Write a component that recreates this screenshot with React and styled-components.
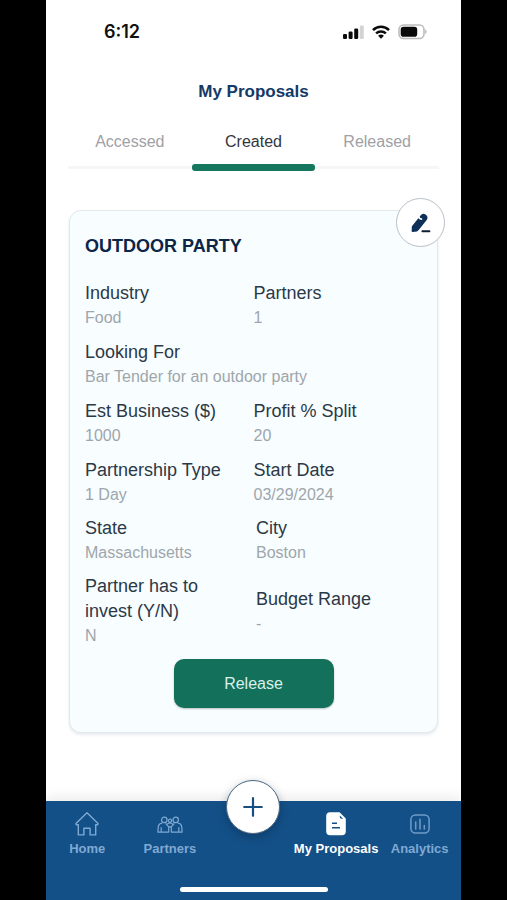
import React, { useState } from "react";
import styled, { createGlobalStyle } from "styled-components";

const GlobalStyle = createGlobalStyle`
  * {
    box-sizing: border-box;
  }

  body {
    margin: 0;
    background: #000;
    font-family: "Liberation Sans", Arial, sans-serif;
  }

  button {
    border: 0;
    padding: 0;
    background: none;
    font-family: inherit;
    cursor: pointer;
  }
`;

const Screen = styled.div`
  display: flex;
  flex-direction: column;
  min-height: 100vh;
  margin: 0 46px;
  background: #fff;
`;

const StatusBar = styled.div`
  display: flex;
  align-items: center;
  justify-content: space-between;
  height: 64px;
  padding: 0 34px 0 58px;
`;

const Time = styled.span`
  font-family: Inter, sans-serif;
  font-size: 18px;
  font-weight: 600;
  line-height: 24px;
  color: #111;
`;

const StatusIcons = styled.div`
  display: flex;
  align-items: center;
  gap: 8px;
`;

const Title = styled.h1`
  margin: 16px 0 0;
  font-size: 17px;
  line-height: 24px;
  text-align: center;
  color: #133a66;
`;

const Tabs = styled.div`
  display: grid;
  grid-template-columns: repeat(3, 1fr);
  margin: 24px 22px 0;
`;

const Tab = styled.button`
  display: flex;
  flex-direction: column;
  align-items: stretch;
  font-size: 16px;
  line-height: 28px;
  color: ${props => (props.$active ? "#33363b" : "#a0a1a4")};

  &::after {
    content: "";
    height: ${props => (props.$active ? 7 : 3)}px;
    margin-top: ${props => (props.$active ? 8 : 10)}px;
    border-radius: ${props => (props.$active ? 3 : 0)}px;
    background: ${props => (props.$active ? "#16775f" : "#f6f6f7")};
  }
`;

const Main = styled.main`
  flex: 1;
  padding: 39px 23px 28px;
`;

const Card = styled.article`
  position: relative;
  padding: 23px 15px 24px;
  border: 1px solid #e1e9ee;
  border-radius: 12px;
  background: #f8fdff;
  box-shadow: 0 2px 3px rgba(20, 50, 80, 0.1);
`;

const CardTitle = styled.h2`
  margin: 0 0 23px;
  font-size: 18px;
  line-height: 24px;
  color: #0d2547;
`;

const EditButton = styled.button`
  position: absolute;
  top: -13px;
  right: -8px;
  display: flex;
  align-items: center;
  justify-content: center;
  width: 49px;
  height: 49px;
  border: 1px solid #b9c0c8;
  border-radius: 50%;
  background: #fff;
`;

const Fields = styled.dl`
  display: grid;
  grid-template-columns: 1fr 1fr;
  align-items: center;
  gap: ${props => (props.$spaced ? "10px 5px" : "11px 0")};
  margin: 0 0 10px;
`;

const FieldBox = styled.div`
  grid-column: ${props => (props.$wide ? "1 / -1" : "auto")};
  padding-right: 16px;
`;

const Label = styled.dt`
  font-size: 18px;
  line-height: 25px;
  color: #2b3947;
`;

const Value = styled.dd`
  margin: 0;
  font-size: 16px;
  line-height: 23px;
  color: #9ea6ab;
`;

const ReleaseButton = styled.button`
  display: block;
  width: 160px;
  height: 49px;
  margin: 12px auto 0;
  border-radius: 10px;
  background: #13705b;
  box-shadow: 0 1px 2px rgba(0, 0, 0, 0.25);
  font-size: 16px;
  color: #d8f1e9;
`;

const BottomBar = styled.footer`
  background: #135087;
  box-shadow: 0 -4px 12px rgba(0, 0, 0, 0.08);
`;

const Nav = styled.nav`
  display: grid;
  grid-template-columns: repeat(5, 1fr);
  justify-items: center;
  height: 84px;
  padding-top: 10px;
`;

const NavLink = styled.a`
  display: flex;
  flex-direction: column;
  align-items: center;
  gap: 2px;
  font-size: 13px;
  font-weight: bold;
  line-height: 20px;
  white-space: nowrap;
  text-decoration: none;
  color: ${props => (props.$active ? "#fff" : "#7fa9d3")};
`;

const AddButton = styled.button`
  display: flex;
  align-items: center;
  justify-content: center;
  width: 54px;
  height: 54px;
  margin-top: -31px;
  border: 1px solid #4d6880;
  border-radius: 50%;
  background: #fff;
  box-shadow: 0 3px 10px rgba(0, 20, 50, 0.3);
`;

const HomeIndicator = styled.div`
  width: 148px;
  height: 5px;
  margin: 2px auto 8px;
  border-radius: 3px;
  background: #fff;
`;

function SignalIcon() {
  return (
    <svg width="21" height="14" viewBox="0 0 21 14">
      <rect x="0" y="9" width="4" height="5" rx="1.3" fill="#0a0a0a" />
      <rect x="5.6" y="6.5" width="4" height="7.5" rx="1.3" fill="#0a0a0a" />
      <rect x="11.2" y="3.5" width="4" height="10.5" rx="1.3" fill="#0a0a0a" />
      <rect x="16.8" y="0.5" width="4" height="13.5" rx="1.3" fill="#d3d3d3" />
    </svg>
  );
}

function WifiIcon() {
  return (
    <svg width="18" height="14" viewBox="0 0 18 14">
      <g fill="none" stroke="#0a0a0a" strokeWidth="2.5">
        <path d="M1 5.1C5.5 0.7 12.5 0.7 17 5.1" />
        <path d="M4.1 8.4c2.8-2.6 7-2.6 9.8 0" />
      </g>
      <path d="M9 13.8 6.1 10.8a4.2 4.2 0 0 1 5.8 0z" fill="#0a0a0a" />
    </svg>
  );
}

function BatteryIcon() {
  return (
    <svg width="29" height="16" viewBox="0 0 29 16">
      <rect x="1" y="1" width="25" height="13.5" rx="4.5" fill="#fff" stroke="#bdbdbd" strokeWidth="1.6" />
      <rect x="2.7" y="2.7" width="16.5" height="10" rx="2.8" fill="#0a0a0a" />
      <path d="M27.3 5.6v4.3c1.5-.6 1.5-3.7 0-4.3z" fill="#a5a5a5" />
    </svg>
  );
}

function EditIcon() {
  return (
    <svg width="20" height="20" viewBox="0 0 20 20" strokeLinecap="round">
      <path d="M12.5 4.8 4.7 14.6" stroke="#0d2f58" strokeWidth="7.6" />
      <path d="M1.3 12.5.6 17.6c-.1 1 .5 1.6 1.5 1.5l4.5-1z" fill="#0d2f58" />
      <path d="M7.6 3.4c.3 1.6 1.3 2.6 2.9 2.7" fill="none" stroke="#fff" strokeWidth="1.6" />
      <path d="M11.4 18.2h7" stroke="#0d1f38" strokeWidth="2" />
    </svg>
  );
}

function HomeIcon() {
  return (
    <svg width="26" height="26" viewBox="0 0 26 26" fill="none" stroke="currentColor" strokeWidth="1.4" strokeLinejoin="round">
      <path d="M13 1.7 2.2 12.3c-.5.6-.2 1.4.6 1.4h1.5v10.2h5.6v-6.7h6.2v6.7h5.6V13.7h1.5c.8 0 1.1-.8.6-1.4z" />
    </svg>
  );
}

function PartnersIcon() {
  return (
    <svg width="26" height="26" viewBox="0 0 26 26" fill="none" stroke="currentColor" strokeWidth="1.2" strokeLinejoin="round">
      <circle cx="7.3" cy="8.9" r="2.7" />
      <circle cx="18.7" cy="8.9" r="2.7" />
      <circle cx="13" cy="9.8" r="1.6" />
      <path d="M5.3 12.2c-2.6.2-3.9 1.9-4.1 4.2l-.3 4.7h10.8v-5.3L8.6 12.3" />
      <path d="M20.7 12.2c2.6.2 3.9 1.9 4.1 4.2l.3 4.7H14.3v-5.3l3.1-3.5" />
      <path d="M4.2 16.3v4.8M21.8 16.3v4.8M9.9 13.2l3.1-1.5 3.1 1.5M11.7 15.8h2.6" />
    </svg>
  );
}

function ProposalsIcon() {
  return (
    <svg width="26" height="26" viewBox="0 0 26 26">
      <path
        d="M7 1.3h9.6l6.2 6.2v12.9c0 2.4-1.4 3.8-3.8 3.8H7c-2.4 0-3.8-1.4-3.8-3.8V5.1c0-2.4 1.4-3.8 3.8-3.8z"
        fill="#fff"
      />
      <path d="M16.8 4.4v1.4c0 1.2.7 1.9 1.9 1.9h1.4z" fill="#135087" />
      <path d="M9 12.3h5M9 16.7h8" stroke="#135087" strokeWidth="1.6" />
    </svg>
  );
}

function AnalyticsIcon() {
  return (
    <svg width="26" height="26" viewBox="0 0 26 26" fill="none" stroke="currentColor" strokeWidth="1.5" opacity="0.85">
      <rect x="3.9" y="3.9" width="18.2" height="18.2" rx="4.5" />
      <path d="M8.7 11v7M13 8.3V18M17.3 14.5V18" strokeLinecap="round" />
    </svg>
  );
}

function Field(props) {
  const { label, value, wide } = props;
  return (
    <FieldBox $wide={wide}>
      <Label>{label}</Label>
      <Value>{value}</Value>
    </FieldBox>
  );
}

function NavItem(props) {
  const { icon, label, active } = props;
  return (
    <NavLink href="#" $active={active} aria-current={active ? "page" : undefined}>
      {icon}
      {label}
    </NavLink>
  );
}

function ProposalCard() {
  return (
    <Card>
      <CardTitle>OUTDOOR PARTY</CardTitle>
      <EditButton type="button" aria-label="Edit proposal">
        <EditIcon />
      </EditButton>
      <Fields>
        <Field label="Industry" value="Food" />
        <Field label="Partners" value="1" />
        <Field label="Looking For" value="Bar Tender for an outdoor party" wide />
        <Field label="Est Business ($)" value="1000" />
        <Field label="Profit % Split" value="20" />
        <Field label="Partnership Type" value="1 Day" />
        <Field label="Start Date" value="03/29/2024" />
      </Fields>
      <Fields $spaced>
        <Field label="State" value="Massachusetts" />
        <Field label="City" value="Boston" />
        <Field label="Partner has to invest (Y/N)" value="N" />
        <Field label="Budget Range" value="-" />
      </Fields>
      <ReleaseButton type="button">Release</ReleaseButton>
    </Card>
  );
}

const tabs = ["Accessed", "Created", "Released"];

function App() {
  const [tab, setTab] = useState("Created");

  return (
    <>
      <GlobalStyle />
      <Screen>
        <StatusBar>
          <Time>6:12</Time>
          <StatusIcons>
            <SignalIcon />
            <WifiIcon />
            <BatteryIcon />
          </StatusIcons>
        </StatusBar>
        <Title>My Proposals</Title>
        <Tabs role="tablist">
          {tabs.map(name => (
            <Tab
              key={name}
              type="button"
              role="tab"
              aria-selected={name === tab}
              $active={name === tab}
              onClick={() => setTab(name)}
            >
              {name}
            </Tab>
          ))}
        </Tabs>
        <Main>
          <ProposalCard />
        </Main>
        <BottomBar>
          <Nav>
            <NavItem icon={<HomeIcon />} label="Home" />
            <NavItem icon={<PartnersIcon />} label="Partners" />
            <AddButton type="button" aria-label="Add proposal">
              <svg width="20" height="20" viewBox="0 0 20 20" stroke="#174f82" strokeWidth="2.2" strokeLinecap="round">
                <path d="M10 1.2v17.6M1.2 10h17.6" />
              </svg>
            </AddButton>
            <NavItem icon={<ProposalsIcon />} label="My Proposals" active />
            <NavItem icon={<AnalyticsIcon />} label="Analytics" />
          </Nav>
          <HomeIndicator />
        </BottomBar>
      </Screen>
    </>
  );
}

export default App;
